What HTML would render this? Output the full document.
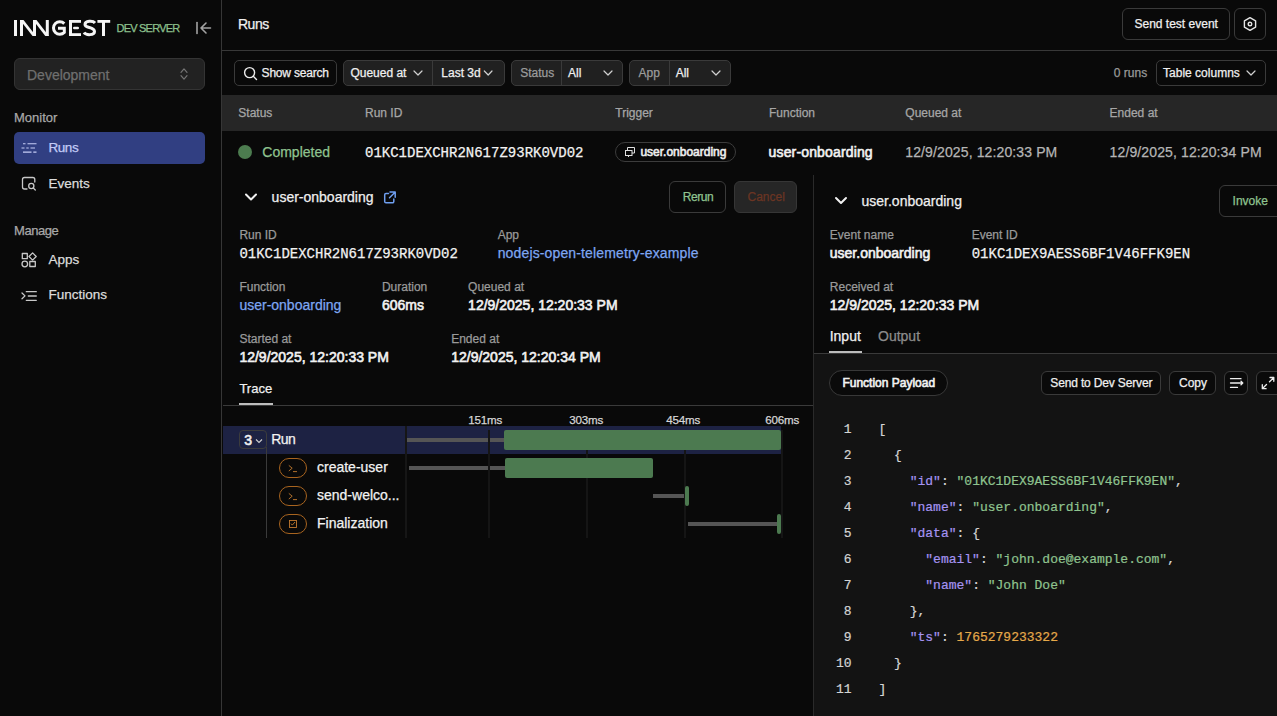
<!DOCTYPE html>
<html><head><meta charset="utf-8">
<style>
*{box-sizing:border-box;margin:0;padding:0}
html,body{width:1277px;height:716px;overflow:hidden;background:#090909;font-family:"Liberation Sans",sans-serif;color:#ececec}
.a{position:absolute}
.t{position:absolute;line-height:1;white-space:nowrap;-webkit-text-stroke:0.25px currentColor}
.m{font-family:"Liberation Mono",monospace}
.bd{border:1px solid #333;border-radius:6px}
.lbl{font-size:12px;color:#9a9a9a}
.val{font-size:14px;color:#f2f2f2;-webkit-text-stroke:0.6px currentColor}
.sb{-webkit-text-stroke:0.6px currentColor}
svg{position:absolute;overflow:visible}
</style></head><body>

<!-- SIDEBAR -->
<div class="a" style="left:221px;top:0;width:1px;height:716px;background:#363636"></div>
<svg style="left:0;top:0" width="120" height="40" viewBox="0 0 120 40">
 <g fill="#f5f5f5">
  <rect x="14" y="20" width="3" height="16"/>
  <rect x="20" y="20" width="3" height="16"/>
  <rect x="33" y="20" width="3" height="16"/>
  <rect x="45.8" y="20" width="3" height="16"/>
  <polygon points="20,20 23.5,20 36,36 32.5,36"/>
  <polygon points="33,20 36.5,20 48.8,36 45.3,36"/>
 </g>
 <g fill="none" stroke="#f5f5f5" stroke-width="3">
  <path d="M64.3 23.6 A6.3 6.3 0 1 0 64.3 32.4 L64.3 28.2 L58 28.2"/>
  <path d="M95 23 C93 20.5 85 20.5 85 24.5 C85 28.5 94.5 26.5 94.5 31.5 C94.5 35.5 86 35.5 84 32.5"/>
 </g>
 <g fill="#f5f5f5">
  <rect x="69" y="20" width="3" height="16"/>
  <rect x="69" y="20" width="12" height="2.8"/>
  <rect x="69" y="33.2" width="12" height="2.8"/>
  <rect x="73" y="26.8" width="6" height="2.5" rx="1.2"/>
  <rect x="97.4" y="20" width="12.8" height="2.8"/>
  <rect x="102" y="20" width="3" height="16"/>
 </g>
</svg>
<div class="t" style="left:116.5px;top:23px;font-size:11px;letter-spacing:-0.78px;color:#8cc08c">DEV SERVER</div>
<svg style="left:0;top:0" width="220" height="40">
 <g stroke="#a3a3a3" stroke-width="1.6" fill="none" stroke-linecap="round" stroke-linejoin="round">
  <path d="M197 22.5 V33.5"/><path d="M210.5 28 H201 M206 23 L201 28 L206 33"/>
 </g>
</svg>

<div class="a" style="left:14px;top:58px;width:191px;height:32px;background:#222;border:1px solid #343434;border-radius:6px"></div>
<div class="t" style="left:27px;top:67.5px;font-size:14px;color:#6f6f6f">Development</div>
<svg style="left:0;top:0" width="220" height="100">
 <g stroke="#757575" stroke-width="1.2" fill="none" stroke-linecap="round" stroke-linejoin="round">
  <path d="M181 72.3 L184 68.9 L187 72.3"/><path d="M181 75.7 L184 79.1 L187 75.7"/>
 </g>
</svg>

<div class="t" style="left:14px;top:110.8px;font-size:13px;color:#a8a8a8">Monitor</div>
<div class="a" style="left:14px;top:132px;width:191px;height:32px;background:#313f82;border-radius:5px"></div>
<svg style="left:0;top:0" width="220" height="320">
 <g stroke="#c6cdf6" stroke-width="1.1" stroke-linecap="butt">
  <path d="M23 143.8H25.5 M27.5 143.8H36.5 M21.5 148H24.5 M26.3 148H28.7 M30.5 148H35 M23 152.1H31.5 M33.3 152.1H36.5"/>
 </g>
 <g stroke="#c8c8c8" stroke-width="1.3" fill="none" stroke-linecap="round" stroke-linejoin="round">
  <path d="M27 189 H24.5 A2 2 0 0 1 22.5 187 V179.5 A2 2 0 0 1 24.5 177.5 H32.8 A2 2 0 0 1 34.8 179.5 V182"/>
  <circle cx="31.3" cy="186" r="2.6"/><path d="M33.2 187.9 L35.3 190"/>
 </g>
 <g stroke="#c8c8c8" stroke-width="1.3" fill="none" stroke-linejoin="round">
  <rect x="22.3" y="253.5" width="5" height="5.2"/>
  <path d="M32.6 252.9 L36.2 256.5 L32.6 260.1 L29 256.5 Z"/>
  <circle cx="24.8" cy="264" r="2.8"/>
  <rect x="29.8" y="261.5" width="5.5" height="5"/>
 </g>
 <g stroke="#c8c8c8" stroke-width="1.3" fill="none" stroke-linecap="round" stroke-linejoin="round">
  <path d="M22 293 L25 295.9 L22 298.8"/>
  <path d="M26.3 291.7 H36.3 M28.3 296 H36.3 M26.3 300.3 H36.3"/>
 </g>
</svg>
<div class="t" style="left:48.5px;top:140.6px;font-size:13.5px;letter-spacing:-0.45px;color:#c3cbf7">Runs</div>
<div class="t" style="left:48.5px;top:176.5px;font-size:13.5px;color:#dcdcdc">Events</div>
<div class="t" style="left:14px;top:224px;font-size:13px;letter-spacing:-0.45px;color:#a8a8a8">Manage</div>
<div class="t" style="left:48.5px;top:252.9px;font-size:13.5px;color:#dcdcdc">Apps</div>
<div class="t" style="left:48.5px;top:288.4px;font-size:13.5px;color:#dcdcdc">Functions</div>

<!-- HEADER -->
<div class="t" style="left:238px;top:16.8px;font-size:14px;letter-spacing:-0.5px;color:#f0f0f0">Runs</div>
<div class="a" style="left:222px;top:50px;width:1055px;height:1px;background:#383838"></div>
<div class="a bd" style="left:1122px;top:8px;width:108px;height:32px;border-color:#3a3a3a"></div>
<div class="t" style="left:1134.5px;top:18.3px;font-size:12px;color:#f0f0f0">Send test event</div>
<div class="a bd" style="left:1234px;top:8px;width:32px;height:32px;border-color:#3a3a3a"></div>
<svg style="left:0;top:0" width="1277" height="50">
 <g stroke="#e6e6e6" stroke-width="1.4" fill="none" stroke-linejoin="round">
  <path d="M1250 17.6 L1255.6 20.8 V27.2 L1250 30.4 L1244.4 27.2 V20.8 Z"/>
  <circle cx="1250" cy="24" r="1.8"/>
 </g>
</svg>


<!-- TOOLBAR -->
<div class="a bd" style="left:234px;top:60px;width:103px;height:26px;border-color:#3a3a3a;border-radius:5px"></div>

<div class="t" style="left:261.6px;top:67.3px;font-size:12px;letter-spacing:-0.2px;color:#f0f0f0">Show search</div>
<div class="a bd" style="left:343px;top:60px;width:162px;height:26px;background:#202020;border-color:#3a3a3a;border-radius:5px"></div>
<div class="a" style="left:432px;top:61px;width:1px;height:24px;background:#3a3a3a"></div>
<div class="t" style="left:350.4px;top:67.3px;font-size:12px;color:#f0f0f0">Queued at</div>
<div class="t" style="left:441.3px;top:67.3px;font-size:12px;color:#f0f0f0">Last 3d</div>
<div class="a bd" style="left:511px;top:60px;width:112px;height:26px;background:#202020;border-color:#3a3a3a;border-radius:5px"></div>
<div class="a" style="left:561px;top:61px;width:1px;height:24px;background:#3a3a3a"></div>
<div class="t" style="left:520.2px;top:67.3px;font-size:12px;color:#9c9c9c">Status</div>
<div class="t" style="left:568.1px;top:67.3px;font-size:12px;color:#f0f0f0">All</div>
<div class="a bd" style="left:629px;top:60px;width:102px;height:26px;background:#202020;border-color:#3a3a3a;border-radius:5px"></div>
<div class="a" style="left:669px;top:61px;width:1px;height:24px;background:#3a3a3a"></div>
<div class="t" style="left:638.6px;top:67.3px;font-size:12px;color:#9c9c9c">App</div>
<div class="t" style="left:675.7px;top:67.3px;font-size:12px;color:#f0f0f0">All</div>
<div class="t" style="left:1113.8px;top:67.3px;font-size:12px;color:#9a9a9a">0 runs</div>
<div class="a bd" style="left:1156px;top:60px;width:110px;height:26px;border-color:#3a3a3a;border-radius:5px"></div>
<div class="t" style="left:1163.1px;top:67.3px;font-size:12px;color:#f0f0f0">Table columns</div>

<svg style="left:0;top:0" width="1277" height="95">
 <g stroke="#ededed" stroke-width="1.4" fill="none" stroke-linecap="round">
  <circle cx="249.6" cy="72.6" r="5"/><path d="M253.3 76.3 L256.5 79.5"/>
 </g>
 <g stroke="#d0d0d0" stroke-width="1.2" fill="none" stroke-linecap="round" stroke-linejoin="round">
  <path d="M414 71 L418 75 L422 71"/>
  <path d="M484.3 71 L488.2 75 L492 71"/>
  <path d="M604 71 L608 75 L612 71"/>
  <path d="M712 71 L716 75 L720 71"/>
  <path d="M1247 71 L1251 75 L1255 71"/>
 </g>
</svg>
<!-- TABLE -->
<div class="a" style="left:222px;top:95px;width:1055px;height:36px;background:#262626"></div>
<div class="t lbl" style="left:238.3px;top:107px;color:#a6a6a6">Status</div>
<div class="t lbl" style="left:365px;top:107px;color:#a6a6a6">Run ID</div>
<div class="t lbl" style="left:615.3px;top:107px;color:#a6a6a6">Trigger</div>
<div class="t lbl" style="left:769px;top:107px;color:#a6a6a6">Function</div>
<div class="t lbl" style="left:905.3px;top:107px;color:#a6a6a6">Queued at</div>
<div class="t lbl" style="left:1109.6px;top:107px;color:#a6a6a6">Ended at</div>

<div class="a" style="left:238px;top:145px;width:14px;height:14px;border-radius:50%;background:#4c7c4f"></div>
<div class="t" style="left:262.3px;top:145px;font-size:14px;color:#8fc38f">Completed</div>
<div class="t m" style="left:365px;top:146.1px;font-size:14px;color:#f2f2f2">01KC1DEXCHR2N617Z93RK0VD02</div>
<div class="a" style="left:615px;top:142px;width:121px;height:20px;border:1px solid #3c3c3c;border-radius:10px"></div>
<svg style="left:0;top:0" width="1277" height="175">
 <g stroke="#e0e0e0" stroke-width="1" fill="none">
  <rect x="625.5" y="150.5" width="6.5" height="5"/>
  <path d="M627.5 150.5 V147.5 H634.5 V153 H632"/>
  <path d="M628.5 155.5 V157"/>
 </g>
</svg>
<div class="t sb" style="left:640.4px;top:145.5px;font-size:12px;color:#ededed">user.onboarding</div>
<div class="t sb" style="left:768.6px;top:145px;font-size:14px;letter-spacing:0.15px;color:#f2f2f2">user-onboarding</div>
<div class="t" style="left:905.3px;top:145px;font-size:14px;letter-spacing:0.12px;color:#b5b5b5">12/9/2025, 12:20:33 PM</div>
<div class="t" style="left:1109.6px;top:145px;font-size:14px;letter-spacing:0.12px;color:#b5b5b5">12/9/2025, 12:20:34 PM</div>


<!-- LEFT DETAIL -->
<div class="a" style="left:813px;top:175px;width:1px;height:541px;background:#2a2a2a"></div>
<svg style="left:0;top:0" width="1277" height="716">
 <g stroke="#f0f0f0" stroke-width="2" fill="none" stroke-linecap="round" stroke-linejoin="round">
  <path d="M246 194.5 L251 199.5 L256 194.5"/>
  <path d="M836 198 L841 203 L846 198"/>
 </g>
 <g stroke="#6f9ff0" stroke-width="1.5" fill="none" stroke-linecap="round" stroke-linejoin="round">
  <path d="M390 192 H395.2 V197.2 M395 192.2 L389.5 197.7"/>
  <path d="M388.5 193.5 H386 A1.3 1.3 0 0 0 384.7 194.8 V201.5 A1.3 1.3 0 0 0 386 202.8 H392.5 A1.3 1.3 0 0 0 393.8 201.5 V199"/>
 </g>
</svg>
<div class="t" style="left:271.6px;top:190.2px;font-size:14px;color:#f0f0f0">user-onboarding</div>
<div class="a bd" style="left:669px;top:181px;width:57px;height:32px;border-color:#3a3a3a;border-radius:6px"></div>
<div class="t" style="left:682.7px;top:190.9px;font-size:12px;letter-spacing:-0.45px;color:#8fc38f">Rerun</div>
<div class="a bd" style="left:734px;top:181px;width:63px;height:32px;background:#262626;border-color:#363636;border-radius:6px"></div>
<div class="t" style="left:747.5px;top:190.9px;font-size:12px;color:#6b3523">Cancel</div>

<div class="t lbl" style="left:239.4px;top:228.8px">Run ID</div>
<div class="t m" style="left:239.4px;top:247.1px;font-size:14px;color:#f2f2f2">01KC1DEXCHR2N617Z93RK0VD02</div>
<div class="t lbl" style="left:497.7px;top:228.8px">App</div>
<div class="t" style="left:497.7px;top:246px;font-size:14px;letter-spacing:0.14px;color:#7ea6f2">nodejs-open-telemetry-example</div>
<div class="t lbl" style="left:239.4px;top:280.7px">Function</div>
<div class="t" style="left:239.4px;top:297.9px;font-size:14px;color:#7ea6f2">user-onboarding</div>
<div class="t lbl" style="left:381.9px;top:280.7px">Duration</div>
<div class="t val" style="left:381.9px;top:297.9px">606ms</div>
<div class="t lbl" style="left:468.1px;top:280.7px">Queued at</div>
<div class="t val" style="left:468.1px;top:297.9px">12/9/2025, 12:20:33 PM</div>
<div class="t lbl" style="left:239.4px;top:332.7px">Started at</div>
<div class="t val" style="left:239.4px;top:350.2px">12/9/2025, 12:20:33 PM</div>
<div class="t lbl" style="left:451.2px;top:332.7px">Ended at</div>
<div class="t val" style="left:451.2px;top:350.2px">12/9/2025, 12:20:34 PM</div>
<div class="t" style="left:239.4px;top:381.8px;font-size:13px;color:#f0f0f0">Trace</div>
<div class="a" style="left:223px;top:405px;width:590px;height:1px;background:#3a3a3a"></div>
<div class="a" style="left:239px;top:403px;width:34px;height:2px;background:#bdbdbd"></div>

<!-- TIMELINE -->
<div class="t" style="right:775px;top:414.3px;font-size:11.6px;letter-spacing:-0.2px;color:#d6d6d6">151ms</div>
<div class="t" style="right:674px;top:414.3px;font-size:11.6px;letter-spacing:-0.2px;color:#d6d6d6">303ms</div>
<div class="t" style="right:577px;top:414.3px;font-size:11.6px;letter-spacing:-0.2px;color:#d6d6d6">454ms</div>
<div class="t" style="right:478px;top:414.3px;font-size:11.6px;letter-spacing:-0.2px;color:#d6d6d6">606ms</div>
<div class="a" style="left:223px;top:426px;width:558px;height:28px;background:#1d2243"></div>
<div class="a" style="left:266px;top:447px;width:1px;height:91px;background:#3a3a3a"></div>
<div class="a" style="left:239px;top:430px;width:28px;height:19px;border:1px solid #3c3c3c;border-radius:4px"></div>
<div class="t sb" style="left:244.2px;top:432.5px;font-size:14px;color:#f0f0f0">3</div>
<svg style="left:0;top:0" width="1277" height="716">
 <path d="M256 439.5 L259 442.5 L262 439.5" stroke="#d0d0d0" stroke-width="1.1" fill="none"/>
</svg>
<div class="t" style="left:271.2px;top:432.3px;font-size:14px;letter-spacing:-0.6px;color:#f2f2f2">Run</div>

<div class="a" style="left:279px;top:458px;width:28px;height:20px;border:1px solid #a8641f;border-radius:10px"></div>
<div class="a" style="left:279px;top:486px;width:28px;height:20px;border:1px solid #a8641f;border-radius:10px"></div>
<div class="a" style="left:279px;top:514px;width:28px;height:20px;border:1px solid #a8641f;border-radius:10px"></div>
<svg style="left:0;top:0" width="1277" height="716">
 <g stroke="#c27a30" stroke-width="0.9" fill="none" stroke-linecap="butt" stroke-linejoin="miter">
  <path d="M288.8 465.4 L292.2 468.2 L288.8 471 M293 471.6 H297"/>
  <path d="M288.8 493.4 L292.2 496.2 L288.8 499 M293 499.6 H297"/>
  <rect x="289.5" y="520.5" width="7" height="7"/>
  <path d="M291 523.6 L292.3 525.1 L295 522"/>
 </g>
</svg>
<div class="t" style="left:317px;top:460.3px;font-size:14px;color:#f2f2f2">create-user</div>
<div class="t" style="left:317px;top:488.3px;font-size:14px;color:#f2f2f2">send-welco...</div>
<div class="t" style="left:317px;top:516.3px;font-size:14px;color:#f2f2f2">Finalization</div>


<div class="a" style="left:407px;top:438px;width:97px;height:4px;background:#555"></div>
<div class="a" style="left:409px;top:466px;width:96px;height:4px;background:#555"></div>
<div class="a" style="left:653px;top:494px;width:32px;height:4px;background:#555"></div>
<div class="a" style="left:688px;top:522px;width:89px;height:4px;background:#555"></div>
<div class="a" style="left:405px;top:426px;width:2px;height:112px;background:#161616"></div>
<div class="a" style="left:488px;top:430px;width:2px;height:108px;background:#151515"></div>
<div class="a" style="left:586px;top:430px;width:2px;height:108px;background:#151515"></div>
<div class="a" style="left:684px;top:430px;width:2px;height:108px;background:#151515"></div>
<div class="a" style="left:781px;top:430px;width:2px;height:108px;background:#151515"></div>
<div class="a" style="left:504px;top:430px;width:277px;height:20px;background:#4c7a50;border-radius:2px"></div>
<div class="a" style="left:505px;top:458px;width:148px;height:20px;background:#4c7a50;border-radius:2px"></div>
<div class="a" style="left:685px;top:486px;width:4px;height:20px;background:#4c7a50;border-radius:2px"></div>
<div class="a" style="left:777px;top:514px;width:4px;height:20px;background:#4c7a50;border-radius:2px"></div>

<!-- RIGHT DETAIL -->
<div class="t" style="left:861.5px;top:194.2px;font-size:14px;color:#f0f0f0">user.onboarding</div>
<div class="a bd" style="left:1219px;top:185px;width:80px;height:32px;border-color:#3a3a3a;border-radius:6px"></div>
<div class="t" style="left:1232.6px;top:194.8px;font-size:12px;color:#8fc38f">Invoke</div>
<div class="t lbl" style="left:829.8px;top:228.8px">Event name</div>
<div class="t sb" style="left:829.8px;top:246.4px;font-size:14px;color:#f2f2f2">user.onboarding</div>
<div class="t lbl" style="left:971.7px;top:228.8px">Event ID</div>
<div class="t m" style="left:971.7px;top:246.8px;font-size:14px;color:#f2f2f2">01KC1DEX9AESS6BF1V46FFK9EN</div>
<div class="t lbl" style="left:829.8px;top:280.7px">Received at</div>
<div class="t val" style="left:829.8px;top:298.2px">12/9/2025, 12:20:33 PM</div>
<div class="t" style="left:829.7px;top:329px;font-size:14px;color:#f0f0f0">Input</div>
<div class="t" style="left:878px;top:329px;font-size:14px;color:#8c8c8c">Output</div>
<div class="a" style="left:814px;top:354px;width:463px;height:362px;background:#131313"></div>
<div class="a" style="left:814px;top:353px;width:463px;height:1px;background:#3a3a3a"></div>
<div class="a" style="left:829px;top:351px;width:33px;height:2px;background:#bdbdbd"></div>

<div class="a" style="left:829px;top:370px;width:119px;height:26px;background:#0a0a0a;border:1px solid #383838;border-radius:13px"></div>
<div class="t sb" style="left:842.4px;top:376.7px;font-size:12px;color:#f2f2f2">Function Payload</div>
<div class="a bd" style="left:1041px;top:371px;width:120px;height:24px;background:#0a0a0a;border-color:#3a3a3a;border-radius:6px"></div>
<div class="t" style="left:1050.3px;top:376.9px;font-size:12px;letter-spacing:-0.15px;color:#f0f0f0">Send to Dev Server</div>
<div class="a bd" style="left:1169px;top:371px;width:47px;height:24px;background:#0a0a0a;border-color:#3a3a3a;border-radius:6px"></div>
<div class="t" style="left:1179px;top:376.9px;font-size:12px;color:#f0f0f0">Copy</div>
<div class="a bd" style="left:1224px;top:371px;width:24px;height:24px;background:#0a0a0a;border-color:#3a3a3a;border-radius:6px"></div>
<div class="a bd" style="left:1256px;top:371px;width:30px;height:24px;background:#0a0a0a;border-color:#3a3a3a;border-radius:6px"></div>
<svg style="left:0;top:0" width="1277" height="716">
 <g stroke="#ededed" stroke-width="1.3" fill="none" stroke-linecap="round" stroke-linejoin="round">
  <path d="M1230.5 378.7 H1241 M1230.5 383 H1242.5 M1241 381.3 L1242.8 383 L1241 384.7 M1230.5 387.4 H1237.5"/>
  <path d="M1270 377.5 H1273.8 V381.3 M1273.5 377.8 L1269.5 381.8 M1266.5 384.5 L1262.5 388.5 M1262.3 384.7 V388.7 H1266.1"/>
 </g>
</svg>

<!-- CODE -->
<div class="a m" style="left:814px;top:416.5px;width:463px;font-size:13px;line-height:26px;white-space:pre;color:#d6d6d6;-webkit-text-stroke:0.2px currentColor"><div style="position:relative;height:26px"><span style="position:absolute;left:-2.5px;width:40px;text-align:right;color:#d4d4d4">1</span><span style="position:absolute;left:64.5px">[</span></div><div style="position:relative;height:26px"><span style="position:absolute;left:-2.5px;width:40px;text-align:right;color:#d4d4d4">2</span><span style="position:absolute;left:64.5px">  {</span></div><div style="position:relative;height:26px"><span style="position:absolute;left:-2.5px;width:40px;text-align:right;color:#d4d4d4">3</span><span style="position:absolute;left:64.5px">    <span style="color:#a593f2">"id"</span>: <span style="color:#8fc48f">"01KC1DEX9AESS6BF1V46FFK9EN"</span>,</span></div><div style="position:relative;height:26px"><span style="position:absolute;left:-2.5px;width:40px;text-align:right;color:#d4d4d4">4</span><span style="position:absolute;left:64.5px">    <span style="color:#a593f2">"name"</span>: <span style="color:#8fc48f">"user.onboarding"</span>,</span></div><div style="position:relative;height:26px"><span style="position:absolute;left:-2.5px;width:40px;text-align:right;color:#d4d4d4">5</span><span style="position:absolute;left:64.5px">    <span style="color:#a593f2">"data"</span>: {</span></div><div style="position:relative;height:26px"><span style="position:absolute;left:-2.5px;width:40px;text-align:right;color:#d4d4d4">6</span><span style="position:absolute;left:64.5px">      <span style="color:#a593f2">"email"</span>: <span style="color:#8fc48f">"john.doe@example.com"</span>,</span></div><div style="position:relative;height:26px"><span style="position:absolute;left:-2.5px;width:40px;text-align:right;color:#d4d4d4">7</span><span style="position:absolute;left:64.5px">      <span style="color:#a593f2">"name"</span>: <span style="color:#8fc48f">"John Doe"</span></span></div><div style="position:relative;height:26px"><span style="position:absolute;left:-2.5px;width:40px;text-align:right;color:#d4d4d4">8</span><span style="position:absolute;left:64.5px">    },</span></div><div style="position:relative;height:26px"><span style="position:absolute;left:-2.5px;width:40px;text-align:right;color:#d4d4d4">9</span><span style="position:absolute;left:64.5px">    <span style="color:#a593f2">"ts"</span>: <span style="color:#e5a94a">1765279233322</span></span></div><div style="position:relative;height:26px"><span style="position:absolute;left:-2.5px;width:40px;text-align:right;color:#d4d4d4">10</span><span style="position:absolute;left:64.5px">  }</span></div><div style="position:relative;height:26px"><span style="position:absolute;left:-2.5px;width:40px;text-align:right;color:#d4d4d4">11</span><span style="position:absolute;left:64.5px">]</span></div></div>

</body></html>
